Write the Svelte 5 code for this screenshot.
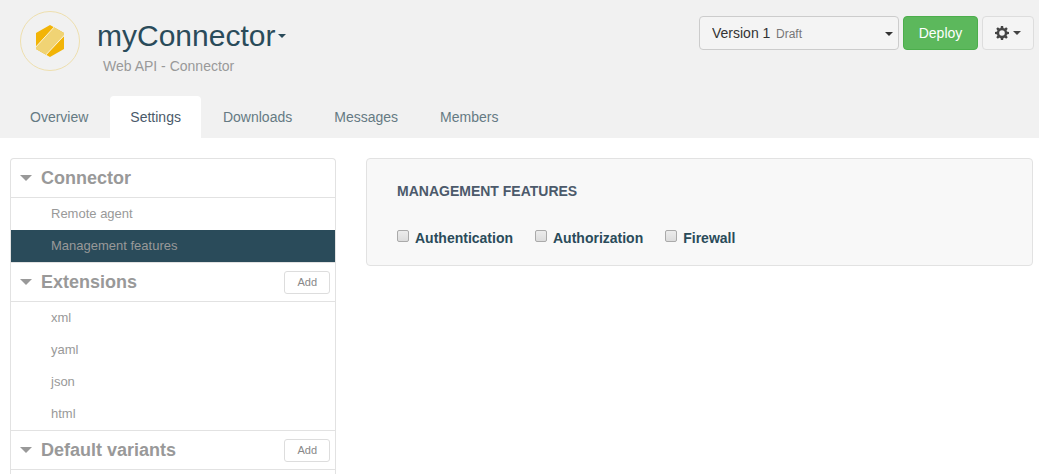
<script>
  const tabs = ['Overview', 'Settings', 'Downloads', 'Messages', 'Members'];
  let activeTab = $state('Settings');

  const sections = [
    { title: 'Connector', addable: false, items: ['Remote agent', 'Management features'] },
    { title: 'Extensions', addable: true, items: ['xml', 'yaml', 'json', 'html'] },
    { title: 'Default variants', addable: true, items: [] }
  ];
  let activeItem = $state('Management features');

  const features = ['Authentication', 'Authorization', 'Firewall'];

  const teeth = [0, 45, 90, 135, 180, 225, 270, 315];
</script>

<div class="page">
  <header class="top">
    <div class="bar">
      <svg class="logo" viewBox="0 0 60 60" aria-hidden="true">
        <defs>
          <clipPath id="hex"><path d="M30 14 44 22V38L30 46 16 38V22Z" /></clipPath>
        </defs>
        <circle cx="30" cy="30" r="29.5" fill="none" stroke="#eedfae" />
        <g clip-path="url(#hex)">
          <path d="M16 14H44V46H16Z" fill="#f2b407" />
          <path d="M14 38 36 14 48 21 23 47Z" fill="#f0d374" />
          <path d="M14 38 36 14M23 47 46 22.5" fill="none" stroke="#fbf3d8" />
        </g>
      </svg>
      <div class="names">
        <h1><button class="name" type="button" aria-haspopup="menu">myConnector<span class="caret"></span></button></h1>
        <p>Web API - Connector</p>
      </div>
      <div class="actions">
        <div class="version">
          <select aria-label="Version">
            <option>Version 1</option>
          </select>
          <span class="state">Draft</span>
          <span class="caret"></span>
        </div>
        <button class="deploy" type="button">Deploy</button>
        <button class="gear" type="button" aria-label="Options" aria-haspopup="menu">
          <svg viewBox="0 0 14 14" aria-hidden="true">
            <circle cx="7" cy="7" r="4" fill="none" stroke="#444" stroke-width="2.4" />
            {#each teeth as angle}
              <path d="M5.5 2.4 5.9 0H8.1L8.5 2.4Z" fill="#444" transform="rotate({angle} 7 7)" />
            {/each}
          </svg>
          <span class="caret"></span>
        </button>
      </div>
    </div>
    <nav class="tabs" aria-label="Sections">
      {#each tabs as tab}
        <a href="#{tab}" class:active={tab === activeTab} onclick={() => (activeTab = tab)}>{tab}</a>
      {/each}
    </nav>
  </header>

  <div class="body">
    <nav class="side" aria-label="Settings">
      {#each sections as section}
        <section>
          <div class="head">
            <span class="fold"></span>
            <h2>{section.title}</h2>
            {#if section.addable}<button class="add" type="button">Add</button>{/if}
          </div>
          {#each section.items as item}
            <a href="#{item}" class:active={item === activeItem} onclick={() => (activeItem = item)}>{item}</a>
          {/each}
        </section>
      {/each}
    </nav>

    <main class="panel">
      <h3>MANAGEMENT FEATURES</h3>
      <div class="checks">
        {#each features as feature}
          <label><input type="checkbox" />{feature}</label>
        {/each}
      </div>
    </main>
  </div>
</div>

<style>
  :global(body) {
    background: #fff;
  }
  .page {
    display: flex;
    flex-direction: column;
    min-height: 100vh;
    font: 14px/20px 'Liberation Sans', Arial, sans-serif;
    color: #2a4b5a;
  }
  .page :is(h1, h2, h3, p) {
    margin: 0;
  }
  .page :is(button, select) {
    font: inherit;
    cursor: pointer;
  }
  a {
    text-decoration: none;
  }
  .top {
    background: #f1f1f1;
  }
  .bar {
    display: flex;
    align-items: flex-start;
    height: 96px;
    padding: 0 5px 0 20px;
    box-sizing: border-box;
  }
  .logo {
    flex: none;
    width: 60px;
    height: 60px;
    margin-top: 11px;
  }
  .names {
    flex: 1;
    padding: 15px 0 0 17px;
  }
  h1 {
    font-size: 30px;
    font-weight: 400;
    line-height: 41px;
  }
  .page .name {
    display: flex;
    align-items: center;
    gap: 3px;
    padding: 0;
    border: 0;
    background: none;
    color: #2a4b5a;
  }
  .names p {
    padding-left: 6px;
    color: #999;
  }
  .caret {
    flex: none;
    width: 0;
    border: 4px solid transparent;
    border-top-color: currentColor;
    border-bottom: 0;
  }
  .actions {
    display: flex;
    gap: 4px;
    padding-top: 16px;
  }
  .version {
    position: relative;
    width: 200px;
    color: #333;
  }
  .version select {
    width: 100%;
    height: 34px;
    padding: 0 12px;
    appearance: none;
    border: 1px solid #ccc;
    border-radius: 4px;
    background: #f4f4f4;
    color: inherit;
  }
  .state {
    position: absolute;
    top: 8px;
    left: 77px;
    font-size: 12px;
    color: #777;
    pointer-events: none;
  }
  .version .caret {
    position: absolute;
    top: 16px;
    right: 6px;
    pointer-events: none;
  }
  .deploy,
  .gear {
    height: 34px;
    border-radius: 4px;
  }
  .deploy {
    min-width: 75px;
    padding: 0 14px;
    border: 1px solid #4cae4c;
    background: #5cb85c;
    color: #fff;
  }
  .gear {
    display: flex;
    align-items: center;
    gap: 4px;
    padding: 0 12px;
    border: 1px solid #ddd;
    background: #f4f4f4;
    color: #444;
  }
  .gear svg {
    width: 14px;
    height: 14px;
  }
  .tabs {
    display: flex;
    gap: 2px;
    padding-left: 10px;
  }
  .tabs a {
    padding: 11px 20px;
    border-radius: 4px 4px 0 0;
    color: #657a83;
  }
  .tabs a.active {
    background: #fff;
    color: #4a5a6a;
  }
  .body {
    flex: 1;
    display: flex;
    align-items: flex-start;
    gap: 30px;
    padding: 20px 6px 0 10px;
  }
  .side {
    flex: 0 0 326px;
    align-self: stretch;
    box-sizing: border-box;
    border: solid #e2e2e2;
    border-width: 1px 1px 0;
    border-radius: 4px 4px 0 0;
    color: #999;
  }
  .head {
    display: flex;
    align-items: center;
    height: 38px;
    padding: 0 5px 0 9px;
    border: solid #e2e2e2;
    border-width: 1px 0;
  }
  section:first-child .head {
    border-top: 0;
  }
  .fold {
    width: 0;
    margin-right: 9px;
    border: solid transparent;
    border-width: 6px 6px 0;
    border-top-color: #999;
  }
  h2 {
    flex: 1;
    font-size: 18px;
    line-height: 20px;
  }
  .page .add {
    height: 23px;
    padding: 0 12px;
    border: 1px solid #ddd;
    border-radius: 3px;
    background: #fff;
    font-size: 11px;
    color: #888;
  }
  .side a {
    display: block;
    padding: 0 40px;
    font-size: 13px;
    line-height: 32px;
    color: #999;
  }
  .side a.active {
    background: #2a4b5a;
  }
  .panel {
    flex: 1;
    padding: 22px 30px 17px;
    border: 1px solid #e2e2e2;
    border-radius: 4px;
    background: #f8f8f8;
  }
  h3 {
    font-size: 14px;
    line-height: 20px;
    color: #4c5a6b;
  }
  .checks {
    display: flex;
    flex-wrap: wrap;
    gap: 22px;
    padding-top: 27px;
  }
  .checks label {
    display: flex;
    gap: 6px;
    font-weight: 700;
  }
  .checks input {
    width: 12px;
    height: 12px;
    margin: 2px 0 0;
    appearance: none;
    border: 1px solid #aaa;
    border-radius: 2px;
    background: linear-gradient(#ececec, #dcdcdc);
  }
  .checks input:checked {
    background: #2a4b5a;
  }
</style>
